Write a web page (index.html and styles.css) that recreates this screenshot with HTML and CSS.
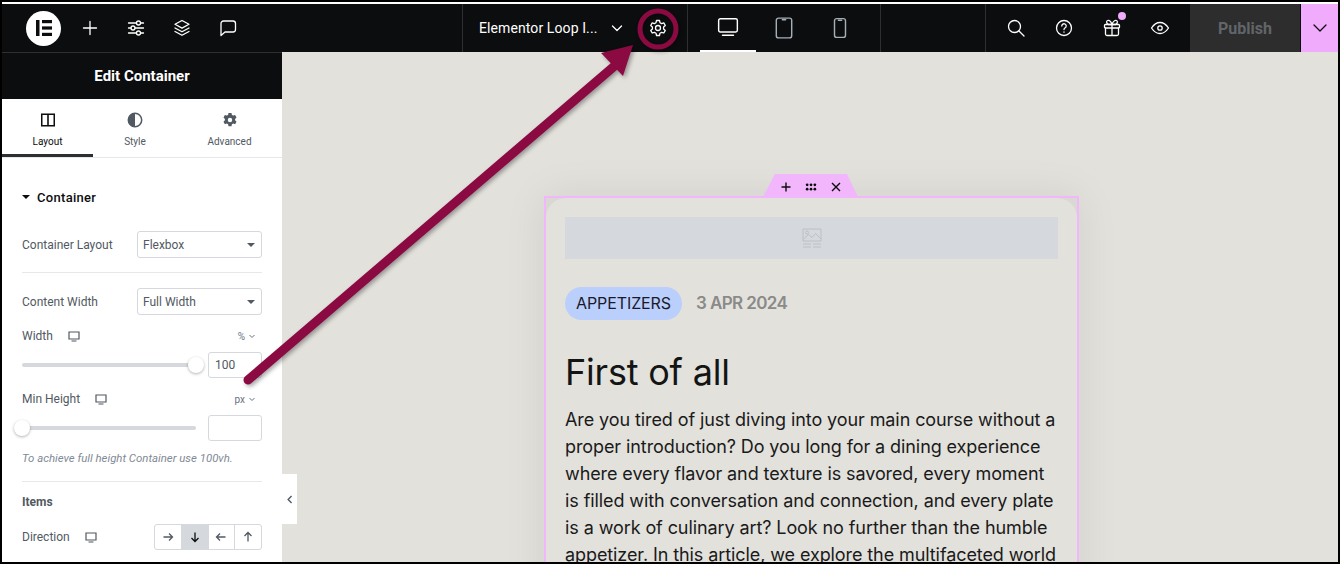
FILE: index.html
```html
<!DOCTYPE html>
<html>
    <head>
        <meta charset="UTF-8">
        <title>Edit Container</title>
        <link rel="stylesheet" href="styles.css">
    </head>
    <body>
        <div class="frame">
            <header class="topbar">
                <div class="bar-left">
                    <div class="logo"><svg width="20" height="20" viewBox="0 0 20 20"><rect x="2" y="2" width="3.5" height="16" fill="#0c0d0e"/><rect x="8" y="2" width="10" height="3.2" fill="#0c0d0e"/><rect x="8" y="8.4" width="10" height="3.2" fill="#0c0d0e"/><rect x="8" y="14.8" width="10" height="3.2" fill="#0c0d0e"/></svg></div>
                    <span class="bar-icon"><svg class="ico" viewBox="0 0 20 20"><path d="M10 3.500v13M3.500 10h13"/></svg></span>
                    <span class="bar-icon"><svg class="ico" viewBox="0 0 20 20"><path d="M2.500 5h8M14.500 5h3M2.500 10h2.500M9 10h8.500M2.500 15h8M14.500 15h3"/><circle cx="12.500" cy="5" r="2"/><circle cx="7" cy="10" r="2"/><circle cx="12.500" cy="15" r="2"/></svg></span>
                    <span class="bar-icon"><svg class="ico" viewBox="0 0 20 20"><path d="M10 2.500l7 3.800-7 3.800-7-3.800zM3 10l7 3.800 7-3.800M3 13.500l7 3.800 7-3.800"/></svg></span>
                    <span class="bar-icon"><svg class="ico" viewBox="0 0 20 20"><path d="M5.500 3h9.500a2.500 2.500 0 0 1 2.500 2.500v6a2.500 2.500 0 0 1-2.500 2.500h-8l-4 3.500v-12a2.500 2.500 0 0 1 2.500-2.500z"/></svg></span>
                </div>
                <div class="bar-title">
                    <span class="doc-name">Elementor Loop I...</span>
                    <svg class="ico ico-sm" viewBox="0 0 14 14"><path d="M2.500 5l4.500 4.500 4.500-4.500"/></svg>
                    <svg class="ico gear" viewBox="0 0 20 20"><path d="M8.500 2.500h3l.5 2.200 1.600.9 2.200-.7 1.500 2.600-1.700 1.500v1.900l1.700 1.500-1.500 2.600-2.200-.7-1.600.9-.5 2.300h-3l-.5-2.300-1.600-.9-2.200.7-1.500-2.600 1.700-1.500v-1.900l-1.700-1.500 1.500-2.600 2.200.7 1.600-.9z"/><circle cx="10" cy="10" r="2.500"/></svg>
                </div>
                <div class="bar-devices">
                    <span class="device device-on"><svg class="ico ico-lg" viewBox="0 0 20 20"><rect x="1.500" y="2.500" width="17" height="12" rx="1.500"/><path d="M5 17.500h10"/></svg></span>
                    <span class="device"><svg class="ico ico-lg" viewBox="0 0 20 20"><rect x="3" y="1" width="14" height="18" rx="2"/><path d="M8.500 2.500h3"/></svg></span>
                    <span class="device"><svg class="ico ico-lg" viewBox="0 0 20 20"><rect x="5" y="1.500" width="10" height="17" rx="2"/><path d="M8.500 3h3"/></svg></span>
                </div>
                <div class="bar-gap"></div>
                <div class="bar-right">
                    <span class="bar-icon"><svg class="ico" viewBox="0 0 20 20"><circle cx="8.500" cy="8.500" r="6"/><path d="M13 13l5 5"/></svg></span>
                    <span class="bar-icon"><svg class="ico" viewBox="0 0 20 20"><circle cx="10" cy="10" r="7.500"/><path d="M7.800 8a2.200 2.200 0 1 1 3.400 1.800c-.8.5-1.200 1-1.200 1.800M10 14v.2"/></svg></span>
                    <span class="bar-icon gift"><svg class="ico" viewBox="0 0 20 20"><rect x="2.500" y="6.500" width="15" height="3.500" rx="1"/><path d="M3.500 10v6a1.500 1.500 0 0 0 1.500 1.500h10a1.500 1.500 0 0 0 1.500-1.500v-6M10 6.500v11M10 6.500c-1-3-3-4.500-4.500-4s-1 3.500 1 4zM10 6.500c1-3 3-4.500 4.500-4s1 3.500-1 4z"/></svg><i class="gift-dot"></i></span>
                    <span class="bar-icon"><svg class="ico" viewBox="0 0 20 20"><path d="M1.500 10c2.300-3.500 5-5.500 8.500-5.500s6.200 2 8.500 5.500c-2.300 3.500-5 5.500-8.500 5.500s-6.200-2-8.500-5.500z"/><circle cx="10" cy="10" r="2.200"/></svg></span>
                </div>
                <div class="publish">Publish</div>
                <div class="publish-more"><svg class="ico ico-dark" viewBox="0 0 20 20"><path d="M4 7l6 6 6-6"/></svg></div>
            </header>
            <div class="main">
                <aside class="panel">
                    <div class="panel-head">Edit Container</div>
                    <div class="tabs">
                        <div class="tab tab-on">
                            <svg width="16" height="16" viewBox="0 0 16 16"><path fill="#0c0d0e" d="M1 1.500h14v13H1zM2.500 3v10h4.700V3zm6.300 0v10h4.700V3z" fill-rule="evenodd"/></svg>
                            <span>Layout</span>
                        </div>
                        <div class="tab tab-mid">
                            <svg width="16" height="16" viewBox="0 0 16 16"><circle cx="8" cy="8" r="6.700" fill="none" stroke="#515962" stroke-width="1.500"/><path fill="#515962" d="M8 1.300a6.700 6.700 0 0 0 0 13.400z"/></svg>
                            <span>Style</span>
                        </div>
                        <div class="tab tab-last">
                            <svg width="16" height="16" viewBox="0 0 16 16"><path fill="#515962" fill-rule="evenodd" d="M6.500 1h3l.4 1.900 1.300.7 1.900-.6 1.400 2.500-1.400 1.400v1.400l1.400 1.400-1.400 2.500-1.900-.6-1.300.7-.4 1.900h-3l-.4-1.900-1.300-.7-1.900.6-1.400-2.500 1.400-1.400V6.900L1.500 5.500l1.400-2.500 1.900.6 1.300-.7zM8 5.800a2.200 2.200 0 1 0 0 4.400 2.200 2.200 0 0 0 0-4.400z"/></svg>
                            <span>Advanced</span>
                        </div>
                    </div>
                    <div class="controls">
                        <div class="section-title"><i class="caret"></i>Container</div>
                        <div class="row row-select">
                            <label>Container Layout</label>
                            <div class="select">Flexbox<i class="caret caret-grey"></i></div>
                        </div>
                        <div class="rule rule-one"></div>
                        <div class="row row-select">
                            <label>Content Width</label>
                            <div class="select">Full Width<i class="caret caret-grey"></i></div>
                        </div>
                        <div class="row row-label row-width">
                            <label>Width</label>
                            <svg class="screen" viewBox="0 0 12 12"><path d="M1 2h10v7H1zM3.500 11h5"/></svg>
                            <span class="unit">% <svg class="unit-arrow" viewBox="0 0 8 8"><path d="M1.500 3l2.500 2.500L6.500 3"/></svg></span>
                        </div>
                        <div class="row row-slider">
                            <div class="slider"><i class="thumb thumb-end"></i></div>
                            <div class="num">100</div>
                        </div>
                        <div class="row row-label row-minh">
                            <label>Min Height</label>
                            <svg class="screen" viewBox="0 0 12 12"><path d="M1 2h10v7H1zM3.500 11h5"/></svg>
                            <span class="unit">px <svg class="unit-arrow" viewBox="0 0 8 8"><path d="M1.500 3l2.500 2.500L6.500 3"/></svg></span>
                        </div>
                        <div class="row row-slider">
                            <div class="slider"><i class="thumb"></i></div>
                            <div class="num"></div>
                        </div>
                        <p class="note">To achieve full height Container use 100vh.</p>
                        <div class="rule rule-two"></div>
                        <div class="items-title">Items</div>
                        <div class="row row-dir">
                            <label>Direction</label>
                            <svg class="screen" viewBox="0 0 12 12"><path d="M1 2h10v7H1zM3.500 11h5"/></svg>
                            <div class="dirs">
                                <span class="dir"><svg viewBox="0 0 12 12"><path d="M1.500 6h9M7 2.500L10.500 6 7 9.500"/></svg></span>
                                <span class="dir dir-on"><svg viewBox="0 0 12 12"><path d="M6 1.500v9M2.500 7L6 10.500 9.500 7"/></svg></span>
                                <span class="dir"><svg viewBox="0 0 12 12"><path d="M10.500 6h-9M5 2.500L1.500 6 5 9.500"/></svg></span>
                                <span class="dir"><svg viewBox="0 0 12 12"><path d="M6 10.500v-9M2.500 5L6 1.500 9.500 5"/></svg></span>
                            </div>
                        </div>
                    </div>
                    <div class="collapse"><svg viewBox="0 0 8 8"><path d="M5.500 1.500L3 4l2.500 2.500"/></svg></div>
                </aside>
                <main class="canvas">
                    <div class="card">
                        <div class="handle">
                            <svg viewBox="0 0 12 12"><path d="M6 1.500v9M1.500 6h9"/></svg>
                            <svg viewBox="0 0 14 12"><g class="dots"><circle cx="2.500" cy="3.500" r="1.600"/><circle cx="7" cy="3.500" r="1.600"/><circle cx="11.500" cy="3.500" r="1.600"/><circle cx="2.500" cy="8.500" r="1.600"/><circle cx="7" cy="8.500" r="1.600"/><circle cx="11.500" cy="8.500" r="1.600"/></g></svg>
                            <svg viewBox="0 0 12 12"><path d="M2 2l8 8M10 2l-8 8"/></svg>
                        </div>
                        <div class="card-inner">
                            <div class="placeholder"><svg width="20" height="20" viewBox="0 0 20 20"><path d="M1 1h18v12H1zM1.500 11l5-4.500 3.500 3 3.500-4 5.500 5.500M1 16h8M11 16h8M1 19h8M11 19h8"/><circle cx="5" cy="4.500" r="1.500"/></svg></div>
                            <div class="meta">
                                <span class="badge">APPETIZERS</span>
                                <span class="date">3 APR 2024</span>
                            </div>
                            <h1>First of all</h1>
                            <p class="body-text">Are you tired of just diving into your main course without a proper introduction? Do you long for a dining experience where every flavor and texture is savored, every moment is filled with conversation and connection, and every plate is a work of culinary art? Look no further than the humble appetizer. In this article, we explore the multifaceted world</p>
                        </div>
                    </div>
                </main>
            </div>
            <!-- callout drawn over the editor -->
            <svg class="callout" width="1340" height="564" viewBox="0 0 1340 564">
                <circle cx="658" cy="29" r="18"/>
                <path class="shaft" d="M248 380L618 63"/>
                <path class="head" d="M633 45L601 53L623 76Z"/>
            </svg>
        </div>
    </body>
</html>
```

FILE: styles.css
```css
* {
    box-sizing: border-box;
}
html, body {
    margin: 0;
    padding: 0;
}
body {
    font-family: Roboto, "Liberation Sans", sans-serif;
    font-size: 12px;
    color: #515962;
}
.frame {
    position: relative;
    width: 1340px;
    height: 564px;
    border: 2px solid #000;
    background: #fff;
    padding-top: 2px;
    overflow: hidden;
    display: flex;
    flex-direction: column;
}

/* top bar */
.topbar {
    height: 48px;
    flex: none;
    display: flex;
    background: #0c0d0e;
    color: #fff;
}
.ico {
    width: 20px;
    height: 20px;
    fill: none;
    stroke: #fff;
    stroke-width: 1.300;
    stroke-linecap: round;
    stroke-linejoin: round;
    display: block;
}
.ico-sm {
    width: 14px;
    height: 14px;
}
.ico-lg {
    width: 22px;
    height: 22px;
}
.ico-dark {
    stroke: #0c0d0e;
}
.bar-left {
    width: 461px;
    display: flex;
    align-items: center;
    padding-left: 24px;
    border-right: 1px solid #2d2f31;
}
.logo {
    width: 35px;
    height: 35px;
    border-radius: 50%;
    background: #fff;
    display: flex;
    align-items: center;
    justify-content: center;
    margin-right: 6px;
}
.bar-icon {
    width: 46px;
    display: flex;
    justify-content: center;
    position: relative;
}
.bar-title {
    width: 225px;
    display: flex;
    align-items: center;
    padding-left: 16px;
    border-right: 1px solid #2d2f31;
}
.doc-name {
    font-size: 14px;
    letter-spacing: .1px;
    width: 120px;
    white-space: nowrap;
}
.bar-title .ico-sm {
    margin-left: 11px;
}
.gear {
    margin-left: 24px;
}
.bar-devices {
    width: 193px;
    display: flex;
    padding-left: 12px;
    border-right: 1px solid #2d2f31;
}
.device {
    width: 56px;
    height: 48px;
    display: flex;
    align-items: center;
    justify-content: center;
}
.device .ico {
    stroke: #a4afb7;
}
.device-on {
    border-bottom: 2px solid #fff;
}
.device-on .ico {
    stroke: #fff;
}
.bar-gap {
    width: 105px;
    border-right: 1px solid #2d2f31;
}
.bar-right {
    width: 204px;
    display: flex;
    align-items: center;
    padding-left: 7px;
    gap: 2px;
}
.gift-dot {
    position: absolute;
    left: 29px;
    top: -6px;
    width: 8px;
    height: 8px;
    border-radius: 50%;
    background: #f0abfc;
}
.publish {
    width: 110px;
    background: #2d2d2d;
    color: #616569;
    font-size: 16px;
    font-weight: 700;
    display: flex;
    align-items: center;
    justify-content: center;
}
.publish-more {
    width: 38px;
    background: #f0abfc;
    display: flex;
    align-items: center;
    justify-content: center;
    border-left: 1px solid #0c0d0e;
}

/* editor panel */
.main {
    flex: 1;
    display: flex;
    min-height: 0;
}
.panel {
    position: relative;
    width: 280px;
    flex: none;
    background: #fff;
}
.panel-head {
    height: 47px;
    background: #0c0d0e;
    border-top: 1px solid #2d2f31;
    color: #fff;
    font-size: 15px;
    font-weight: 700;
    display: flex;
    align-items: center;
    justify-content: center;
}
.tabs {
    height: 59px;
    display: flex;
    border-bottom: 1px solid #e6e8ea;
}
.tab {
    width: 91px;
    display: flex;
    flex-direction: column;
    align-items: center;
    padding-top: 13px;
    gap: 8px;
    font-size: 10px;
    color: #515962;
}
.tab-mid {
    width: 84px;
}
.tab-last {
    width: 105px;
}
.tab-on {
    color: #0c0d0e;
    border-bottom: 3px solid #2d2f31;
}
.controls {
    padding: 0 20px;
    height: 405px;
    overflow: hidden;
}
.section-title {
    height: 16px;
    margin-top: 31px;
    display: flex;
    align-items: center;
    font-size: 13px;
    font-weight: 500;
    letter-spacing: .3px;
    color: #0c0d0e;
}
.caret {
    width: 0;
    height: 0;
    border-left: 4px solid transparent;
    border-right: 4px solid transparent;
    border-top: 4px solid #0c0d0e;
    margin-right: 7px;
}
.caret-grey {
    border-top-color: #515962;
    margin: 0;
}
.row {
    display: flex;
    align-items: center;
}
.row label {
    color: #515962;
}
.row-select {
    height: 27px;
    justify-content: space-between;
}
.section-title + .row-select {
    margin-top: 26px;
}
.select {
    width: 125px;
    height: 27px;
    border: 1px solid #d5d8dc;
    border-radius: 3px;
    padding: 0 6px 0 5px;
    display: flex;
    align-items: center;
    justify-content: space-between;
    color: #515962;
}
.rule {
    height: 1px;
    background: #e6e8ea;
}
.rule-one {
    margin: 14px 0 15px;
}
.row-label {
    height: 14px;
}
.row-width {
    margin-top: 14px;
}
.row-minh {
    margin-top: 14px;
}
.screen {
    width: 12px;
    height: 12px;
    margin-left: 15px;
    fill: none;
    stroke: #515962;
    stroke-width: 1.200;
    flex: none;
}
.unit {
    margin-left: auto;
    font-size: 10px;
    color: #69727d;
    display: flex;
    align-items: center;
    gap: 3px;
    margin-right: 6px;
}
.unit-arrow {
    width: 8px;
    height: 8px;
    fill: none;
    stroke: #69727d;
}
.row-slider {
    height: 26px;
    margin-top: 9px;
    justify-content: space-between;
}
.slider {
    position: relative;
    width: 174px;
    height: 4px;
    border-radius: 2px;
    background: #d5d8dc;
}
.thumb {
    position: absolute;
    left: -8px;
    top: -6px;
    width: 16px;
    height: 16px;
    border-radius: 50%;
    background: #fff;
    box-shadow: 0 1px 3px rgba(0, 0, 0, .3);
}
.thumb-end {
    left: auto;
    right: -8px;
}
.num {
    width: 54px;
    height: 26px;
    border: 1px solid #d5d8dc;
    border-radius: 3px;
    padding-left: 6px;
    display: flex;
    align-items: center;
    color: #515962;
}
.note {
    margin: 10px 0 16px;
    height: 14px;
    font-size: 11.400px;
    font-style: italic;
    color: #818a96;
    white-space: nowrap;
}
.rule-two {
    margin-bottom: 13px;
}
.items-title {
    font-weight: 700;
    height: 14px;
    color: #515962;
}
.row-dir {
    height: 26px;
    margin-top: 15px;
}
.dirs {
    margin-left: auto;
    width: 108px;
    height: 26px;
    display: flex;
    border: 1px solid #d5d8dc;
    border-radius: 3px;
    overflow: hidden;
}
.dir {
    flex: 1;
    display: flex;
    align-items: center;
    justify-content: center;
    border-left: 1px solid #d5d8dc;
}
.dir:first-child {
    border-left: 0;
}
.dir svg {
    width: 12px;
    height: 12px;
    fill: none;
    stroke: #515962;
    stroke-width: 1.300;
}
.dir-on {
    background: #d5d8dc;
}
.dir-on svg {
    stroke: #0c0d0e;
}
.collapse {
    position: absolute;
    right: -15px;
    top: 422px;
    width: 15px;
    height: 50px;
    background: #fff;
    display: flex;
    align-items: center;
    justify-content: center;
}
.collapse svg {
    width: 11px;
    height: 11px;
    fill: none;
    stroke: #515962;
    stroke-width: 1;
}

/* canvas */
.canvas {
    flex: 1;
    background: #e2e1dc;
    padding: 144px 0 0 262px;
    overflow: hidden;
    min-width: 0;
}
.card {
    position: relative;
    width: 535px;
    height: 500px;
    border: 2px solid #f1b6fb;
    background: #d9d8d3;
    box-shadow: 0 0 40px rgba(0, 0, 0, .08);
}
.handle {
    position: absolute;
    top: -24px;
    left: 217px;
    width: 95px;
    height: 23px;
    background: #f1b6fb;
    clip-path: polygon(12px 0, calc(100% - 11px) 0, 100% 100%, 0 100%);
    display: flex;
    align-items: center;
    justify-content: center;
    gap: 13px;
    padding-top: 3px;
}
.handle svg {
    width: 12px;
    height: 12px;
    fill: none;
    stroke: #0c0d0e;
    stroke-width: 1.400;
    flex: none;
}
.handle .dots {
    fill: #0c0d0e;
    stroke: none;
}
.card-inner {
    height: 100%;
    background: #e2e1dc;
    border-radius: 20px 20px 0 0;
    padding: 19px 19px 0 19px;
    font-family: Inter, "Liberation Sans", sans-serif;
    color: #1a1a1a;
}
.placeholder {
    height: 42px;
    background: #d5d8dc;
    display: flex;
    align-items: center;
    justify-content: center;
}
.placeholder svg {
    fill: none;
    stroke: #bcc0c5;
}
.meta {
    margin-top: 28px;
    display: flex;
    align-items: center;
    gap: 14px;
}
.badge {
    height: 33px;
    width: 117px;
    border-radius: 17px;
    background: #bbcffc;
    display: flex;
    align-items: center;
    justify-content: center;
    font-size: 16px;
    letter-spacing: -.1px;
    color: #1a1a2a;
    padding-bottom: 1px;
}
.date {
    font-size: 17px;
    font-weight: 600;
    letter-spacing: -.6px;
    color: #8a8a88;
    margin-top: -1px;
}
h1 {
    margin: 29px 0 0;
    font-size: 36px;
    line-height: 46px;
    font-weight: 400;
    letter-spacing: -.2px;
    color: #141414;
}
.body-text {
    margin: 11px 0 0;
    font-size: 18px;
    line-height: 27px;
    letter-spacing: -.09px;
}

/* callout */
.callout {
    position: absolute;
    left: -2px;
    top: -2px;
    filter: drop-shadow(2px 2px 2px rgba(0, 0, 0, .35));
}
.callout circle {
    fill: none;
    stroke: #8b0a42;
    stroke-width: 5;
}
.shaft {
    fill: none;
    stroke: #8b0a42;
    stroke-width: 9;
    stroke-linecap: round;
}
.head {
    fill: #8b0a42;
}
```
